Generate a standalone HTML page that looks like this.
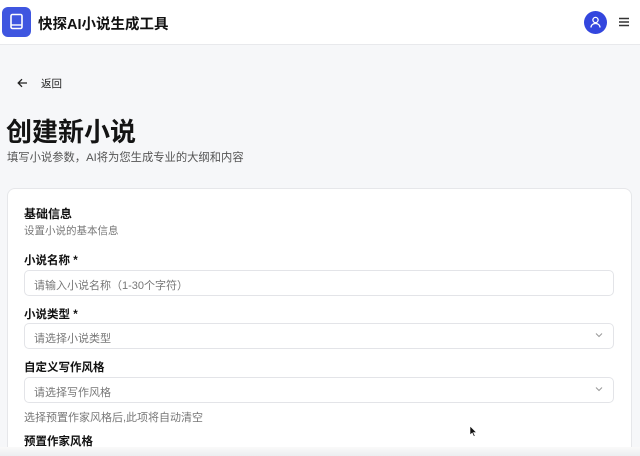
<!DOCTYPE html>
<html><head><meta charset="utf-8"><style>
*{margin:0;padding:0;box-sizing:border-box}
html,body{width:640px;height:456px;overflow:hidden}
body{background:#f6f7f9;font-family:"Liberation Sans","Noto Sans CJK SC",sans-serif;color:#111;position:relative}
.abs{position:absolute;white-space:nowrap}
.hdr{position:absolute;left:0;top:0;width:640px;height:45px;background:#fff;border-bottom:1px solid #e8e9ec}
.logo{position:absolute;left:2px;top:7px;width:29px;height:30px;border-radius:6px;background:#3f56e0}
.card{position:absolute;left:7px;top:188px;width:625px;height:268px;background:#fff;border:1px solid #e6e7ea;border-bottom:none;border-radius:8px 8px 0 0}
.inp{position:absolute;left:24px;width:590px;height:26px;border:1px solid #e3e4e8;border-radius:5px;background:#fff;font-size:11px;color:#777;padding:6px 9px}
.lbl{font-size:11.5px;font-weight:bold;color:#111}
.chev{position:absolute;right:10px;top:8px}
</style></head><body>
<div class="hdr">
 <div class="logo"><svg width="29" height="30" viewBox="0 0 29 30"><rect x="9" y="7.5" width="11" height="14" rx="1.5" fill="none" stroke="#fff" stroke-width="1.6"/><line x1="9" y1="18" x2="20" y2="18" stroke="#fff" stroke-width="1.4"/></svg></div>
 <div class="abs" style="left:38px;top:13px;font-size:14.5px;font-weight:bold">快探AI小说生成工具</div>
 <div class="abs" style="left:584px;top:11px;width:23px;height:23px;border-radius:50%;background:#3346de">
  <svg width="23" height="23" viewBox="0 0 23 23"><circle cx="11.5" cy="9" r="2.6" fill="none" stroke="#fff" stroke-width="1.3"/><path d="M7 16.5c0-2.5 2-4 4.5-4s4.5 1.5 4.5 4" fill="none" stroke="#fff" stroke-width="1.3"/></svg></div>
 <svg class="abs" style="left:619px;top:17px" width="10" height="10" viewBox="0 0 10 10"><path d="M0 1.5h10M0 5h10M0 8.5h10" stroke="#333" stroke-width="1.5"/></svg>
</div>
<svg class="abs" style="left:17px;top:78px" width="11" height="10" viewBox="0 0 11 10"><path d="M10 5H1.5M5 1.2L1.2 5 5 8.8" fill="none" stroke="#222" stroke-width="1.3"/></svg>
<div class="abs" style="left:41px;top:76px;font-size:10.5px;color:#222">返回</div>
<div class="abs" style="left:6px;top:112px;font-size:26px;font-weight:bold;color:#141414">创建新小说</div>
<div class="abs" style="left:7px;top:149px;font-size:11.3px;color:#555">填写小说参数，AI将为您生成专业的大纲和内容</div>
<div class="card"></div>
<div class="abs" style="left:24px;top:205px;font-size:12px;font-weight:bold">基础信息</div>
<div class="abs" style="left:24px;top:223px;font-size:10.5px;color:#777">设置小说的基本信息</div>
<div class="abs lbl" style="left:24px;top:252px">小说名称 *</div>
<div class="inp" style="top:270px">请输入小说名称（1-30个字符）</div>
<div class="abs lbl" style="left:24px;top:306px">小说类型 *</div>
<div class="inp" style="top:323px">请选择小说类型<svg class="chev" width="8" height="6" viewBox="0 0 8 6"><path d="M1 1.5l3 3 3-3" fill="none" stroke="#999" stroke-width="1"/></svg></div>
<div class="abs lbl" style="left:24px;top:359px">自定义写作风格</div>
<div class="inp" style="top:377px">请选择写作风格<svg class="chev" width="8" height="6" viewBox="0 0 8 6"><path d="M1 1.5l3 3 3-3" fill="none" stroke="#999" stroke-width="1"/></svg></div>
<div class="abs" style="left:24px;top:409px;font-size:11px;color:#777">选择预置作家风格后,此项将自动清空</div>
<div class="abs lbl" style="left:24px;top:433px">预置作家风格</div>
<div class="abs" style="left:0;top:447px;width:640px;height:9px;background:linear-gradient(#fafafa,#eceef1)"></div>
<svg class="abs" style="left:469px;top:425px" width="8" height="12" viewBox="0 0 8 12"><path d="M1 1v9l2.2-2 1.6 3.5 1.3-.6-1.6-3.3H7.5z" fill="#111" stroke="#fff" stroke-width=".6"/></svg>
</body></html>
